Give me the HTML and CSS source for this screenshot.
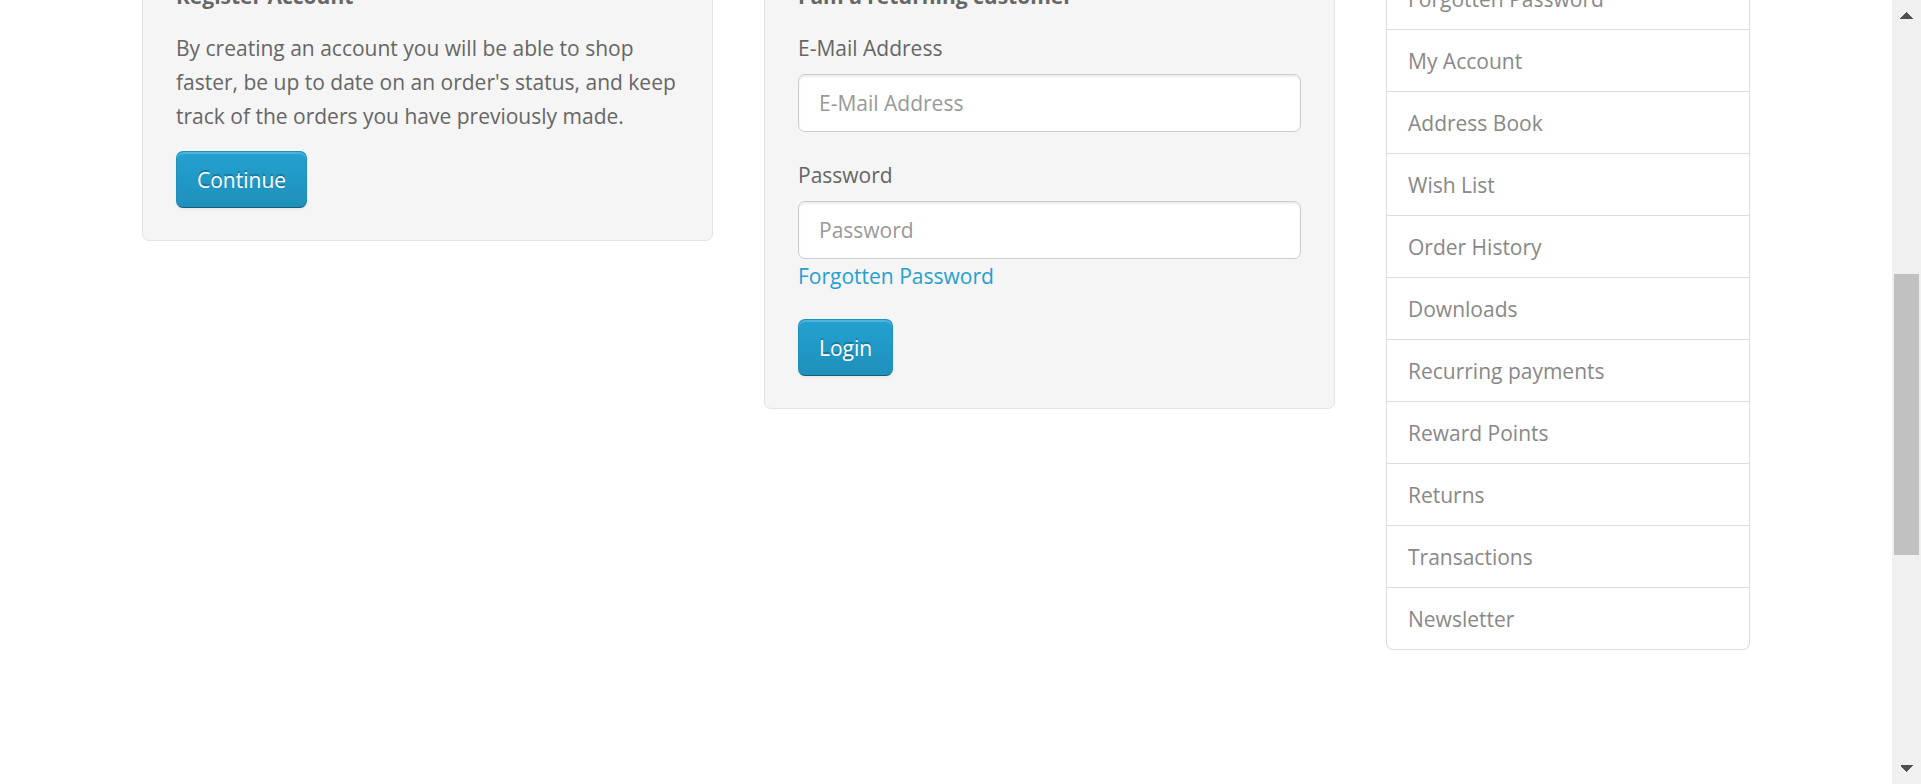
FILE: index.html
```html
<!DOCTYPE html>
<html lang="en">
<head>
<meta charset="utf-8">
<title>Account Login</title>
<link rel="stylesheet" href="styles.css">
</head>
<body>
<div class="window">
  <div class="view">
    <main class="container">
      <section class="well">
        <p><strong>Register Account</strong></p>
        <p>By creating an account you will be able to shop faster, be up to date on an order's status, and keep track of the orders you have previously made.</p>
        <button type="button" class="btn">Continue</button>
      </section>
      <section class="well">
        <p><strong>I am a returning customer</strong></p>
        <form>
          <div class="form-group">
            <label for="input-email">E-Mail Address</label>
            <input type="text" id="input-email" class="form-control" placeholder="E-Mail Address">
          </div>
          <div class="form-group">
            <label for="input-password">Password</label>
            <input type="password" id="input-password" class="form-control" placeholder="Password">
            <a class="forgotten" href="#">Forgotten Password</a>
          </div>
          <button type="button" class="btn">Login</button>
        </form>
      </section>
      <nav class="list-group" aria-label="Account">
        <a href="#">Forgotten Password</a>
        <a href="#">My Account</a>
        <a href="#">Address Book</a>
        <a href="#">Wish List</a>
        <a href="#">Order History</a>
        <a href="#">Downloads</a>
        <a href="#">Recurring payments</a>
        <a href="#">Reward Points</a>
        <a href="#">Returns</a>
        <a href="#">Transactions</a>
        <a href="#">Newsletter</a>
      </nav>
    </main>
  </div>
  <div class="scrollbar" aria-hidden="true">
    <svg class="arrow" viewBox="0 0 29 29"><path d="M14 12h1v1h1v1h1v1h1v1h1v1h1v1h1v1H8v-1h1v-1h1v-1h1v-1h1v-1h1v-1h1z"/></svg>
    <div class="before"></div>
    <div class="thumb"></div>
    <div class="after"></div>
    <svg class="arrow" viewBox="0 0 29 29"><path d="M8 10h13v1h-1v1h-1v1h-1v1h-1v1h-1v1h-1v1h-1v-1h-1v-1h-1v-1h-1v-1h-1v-1h-1v-1H9v-1H8z"/></svg>
  </div>
</div>
</body>
</html>
```
FILE: styles.css
```css
* {
  box-sizing: border-box;
}

body {
  margin: 0;
  background: #fff;
  color: #666;
  font: 400 21px/34px "Open Sans", "Noto Sans", sans-serif;
}

a {
  color: #23a1d1;
  text-decoration: none;
}

p {
  margin: 0 0 18px;
}

.window {
  display: flex;
  height: 100vh;
}

.view {
  flex: 1;
  min-width: 0;
  overflow: hidden;
}

/* The view is scrolled part of the way down the page. */
.container {
  display: grid;
  grid-template-columns: 571fr 571fr 364fr;
  align-items: start;
  gap: 51px;
  max-width: 1608px;
  margin: -55px auto 0;
}

.well {
  padding: 33px 33px 32px;
  background: #f5f5f5;
  border: 1px solid #e3e3e3;
  border-radius: 7px;
}

.well strong {
  font-weight: 700;
}

.form-group {
  display: flex;
  flex-direction: column;
  align-items: flex-start;
  margin-bottom: 26px;
}

.form-group label {
  margin-bottom: 9px;
}

.form-control {
  width: 100%;
  height: 58px;
  padding: 0 20px;
  background: #fff;
  border: 1px solid #ccc;
  border-radius: 7px;
  box-shadow: inset 0 2px 2px rgba(0, 0, 0, 0.075);
  color: #555;
  font: inherit;
}

.form-control::placeholder {
  color: #999;
  opacity: 1;
}

.btn {
  display: block;
  height: 57px;
  padding: 0 20px;
  background: linear-gradient(to bottom, #23a1d1, #1f90bb);
  border: 1px solid;
  border-color: #1f90bb #1f90bb #145e7a;
  border-radius: 7px;
  box-shadow: inset 0 2px 0 rgba(255, 255, 255, 0.2), 0 2px 3px rgba(0, 0, 0, 0.05);
  color: #fff;
  font: inherit;
  text-shadow: 0 -2px 0 rgba(0, 0, 0, 0.25);
}

.list-group {
  margin-top: 23px;
  border: 1px solid #ddd;
  border-top: 0;
  border-radius: 0 0 7px 7px;
}

.list-group a {
  display: block;
  padding: 14px 21px 13px;
  color: #888;
}

.list-group a + a {
  border-top: 1px solid #ddd;
}

.scrollbar {
  display: flex;
  flex-direction: column;
  width: 29px;
  background: #f0f0f0;
}

.arrow {
  display: block;
  flex: none;
  width: 29px;
  height: 29px;
  fill: #505050;
}

.before {
  flex: 245;
}

.thumb {
  flex: 281;
  margin: 0 2px;
  background: #c1c1c1;
}

.after {
  flex: 200;
}
```
